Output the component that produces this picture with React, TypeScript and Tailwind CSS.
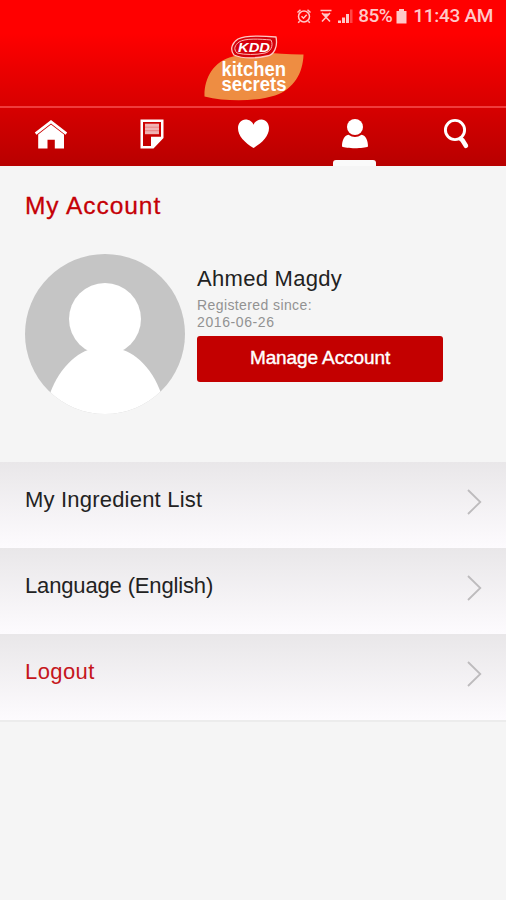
import type { ReactNode } from 'react';

interface NavItemProps {
  label: string;
  active?: boolean;
  children: ReactNode;
}

interface MenuRowProps {
  label: string;
  className: string;
}

function StatusBar() {
  return (
    <div className="flex h-8 items-center justify-end pr-[13px] text-[#ffc8c8]">
      <svg width="16" height="16" viewBox="0 0 16 16" fill="none" stroke="currentColor" strokeWidth="1.5">
        <circle cx="8" cy="8.5" r="5.5" />
        <path d="M1.5 4.5 4.5 1.8M14.5 4.5 11.5 1.8M3.6 13.2 2.2 14.8M12.4 13.2l1.4 1.6M5.5 8.2l2 2 3.2-3.4" />
      </svg>
      <svg className="ml-[7px]" width="14" height="16" viewBox="0 0 14 16" fill="none" stroke="currentColor" strokeWidth="1.5">
        <path d="M1.5 2.5h11M3 5l8 8.5M11 5l-8 8.5" />
        <path d="M4 5.5h6L7 9z" fill="currentColor" stroke="none" />
      </svg>
      <svg className="ml-1" width="17" height="16" viewBox="0 0 17 16" fill="currentColor">
        <path d="M1 12.5h3V15H1zM5 9.5h3V15H5zM9 6h3v9H9z" />
        <path d="M13 1.5h2.5V15H13z" opacity=".35" />
      </svg>
      <span className="ml-1 font-[Roboto,sans-serif] text-[19px] font-medium leading-8 tracking-[-0.5px]">85%</span>
      <svg className="ml-1" width="11" height="16" viewBox="0 0 11 16" fill="currentColor">
        <path d="M3 1h5v2h2.5v12.5H.5V3H3z" />
      </svg>
      <span className="ml-[6px] font-[Roboto,sans-serif] text-[19px] font-medium leading-8 tracking-[-0.3px]">11:43 AM</span>
    </div>
  );
}

function Logo() {
  return (
    <svg className="ml-[203px] block" width="102" height="68" viewBox="203 34 102 68" role="img" aria-label="KDD kitchen secrets">
      <path d="M204.5 96.5C204 79 213 61 233 56.5C256 49 282 55 303.5 54.5C303 73 294 89 275 95.5C256 101.5 227 102 204.5 96.5Z" fill="#ee8d42" />
      <path d="M238 39C246 35 264 36 276 37C278 47 274 55 267 56C257 58 243 59 234 55C229 49 233 42 238 39Z" fill="#d5000b" stroke="#ffc9c4" strokeWidth="1.3" />
      <path d="M239 42C245 38 260 39 271 40C274 46 270 52 265 53C256 55 245 55 237 53C233 49 235 45 239 42Z" fill="#d5000b" stroke="#ffb5b0" strokeWidth="1" />
      <text x="238" y="52" fill="#fff" fontFamily="Liberation Sans, sans-serif" fontSize="12" fontWeight="700" fontStyle="italic" textLength="32" lengthAdjust="spacingAndGlyphs">KDD</text>
      <g fill="#fff" fontFamily="Liberation Sans, sans-serif" fontSize="19.5" fontWeight="700">
        <text x="221.5" y="75.5" textLength="64.5" lengthAdjust="spacingAndGlyphs">kitchen</text>
        <text x="221.5" y="91.2" textLength="65" lengthAdjust="spacingAndGlyphs">secrets</text>
      </g>
    </svg>
  );
}

function NavItem({ label, active, children }: NavItemProps) {
  return (
    <button aria-label={label} className="flex h-full flex-col items-center justify-between pt-3">
      <svg className="overflow-visible" width="34" height="30" viewBox="0 0 34 30" fill="#fff">
        {children}
      </svg>
      {active && <span className="h-[6px] w-[43px] rounded-t-[3px] bg-[#fafafa]" />}
    </button>
  );
}

function NavBar() {
  return (
    <nav className="grid h-[60px] grid-cols-5 border-t-2 border-[#ef3c3c]">
      <NavItem label="Home">
        <path d="M17 0 33.2 12.5 31.5 14.7 17 3.6 2.5 14.7.8 12.5z" />
        <path d="M17 4.6 30 14.5V28.5h-9.2v-8.8h-7.3v8.8H4.2V14.5z" />
      </NavItem>
      <NavItem label="Recipes">
        <path fillRule="evenodd" d="M5.5-.5H28.5V18L18.5 28.5H5.5zM8 2V26H16V16.7H26V2z" />
        <path d="M10 3.7h14v10.5H10z" opacity=".7" />
        <path d="M10 7.2h14M10 10.7h14" stroke="#e66565" strokeWidth=".6" />
      </NavItem>
      <NavItem label="Favourites">
        <path d="M17.5 28C8.5 22.5 2 16 2 8C2 3.3 5.3-.5 9.5-.5C13.3-.5 16.3 1.6 17.5 4.7C18.7 1.6 21.7-.5 25.5-.5C29.7-.5 33 3.3 33 8C33 16 26.5 22.5 17.5 28Z" />
      </NavItem>
      <NavItem label="Account" active>
        <circle cx="18" cy="7" r="8" />
        <path d="M11.5 14.7Q18 19.5 24.5 14.7C29 15.5 31 20.5 31 26.5C27 28.8 9 28.8 5 26.5C5 20.5 7 15.5 11.5 14.7Z" />
      </NavItem>
      <NavItem label="Search">
        <circle cx="17" cy="10" r="9.6" fill="none" stroke="#fff" strokeWidth="2.9" />
        <path d="m22.9 19 1.6 1.3 3.4 5.5" fill="none" stroke="#fff" strokeWidth="4.6" strokeLinecap="round" />
      </NavItem>
    </nav>
  );
}

function Avatar() {
  return (
    <svg className="shrink-0" width="160" height="160" viewBox="0 0 160 160">
      <defs>
        <clipPath id="avatar">
          <circle cx="80" cy="80" r="80" />
        </clipPath>
      </defs>
      <g clipPath="url(#avatar)">
        <path d="M0 0h160v160H0z" fill="#c5c5c5" />
        <circle cx="80" cy="65" r="36" fill="#fff" />
        <path d="M20 160C25 124 46 102 63 96H98C116 102 136 124 141 160Z" fill="#fff" />
      </g>
    </svg>
  );
}

function MenuRow({ label, className }: MenuRowProps) {
  return (
    <button className="flex h-[86px] w-full items-start justify-between bg-linear-to-b from-[#e9e7e9] to-[#fdfbfe] pl-[25px] pr-6 pt-[26px] text-left">
      <span className={`text-[22px] leading-6 ${className}`}>{label}</span>
      <svg className="mt-px" width="15" height="26" viewBox="0 0 15 26" fill="none" stroke="#bdbbbd" strokeWidth="1.8">
        <path d="M1 1 13.3 13 1 25" />
      </svg>
    </button>
  );
}

export default function App() {
  return (
    <div className="h-[900px] w-[506px] overflow-hidden bg-[#f5f5f5] font-['Liberation_Sans',Arial,sans-serif]">
      <header className="h-[166px] bg-linear-to-b from-[#ff0000] from-20% to-[#b80000]">
        <StatusBar />
        <div className="h-[74px] pt-[2px]">
          <Logo />
        </div>
        <NavBar />
      </header>

      <main>
        <h1 className="pl-[25px] pt-[26px] text-[24.5px] leading-7 tracking-[0.95px] text-[#c50006] [-webkit-text-stroke:0.3px]">My Account</h1>
        <section className="flex h-[242px] items-start pl-[25px] pt-[34px]">
          <Avatar />
          <div className="ml-3 pt-3">
            <h2 className="text-[22px] leading-[26px] tracking-[0.3px] text-[#222]">Ahmed Magdy</h2>
            <p className="mt-[5px] text-[14px] leading-[17px] tracking-[0.4px] text-[#929292]">
              Registered since:
              <br />
              <span className="tracking-[0.6px]">2016-06-26</span>
            </p>
            <button className="mt-[5px] block h-[46px] w-[246px] rounded-[3px] bg-[#c30000] pb-[2px] text-[19px] tracking-[-0.1px] text-white [-webkit-text-stroke:0.4px]">
              Manage Account
            </button>
          </div>
        </section>
        <div className="border-b-2 border-[#ececec]">
          <MenuRow label="My Ingredient List" className="tracking-[0.2px] text-[#222]" />
          <MenuRow label="Language (English)" className="tracking-[-0.15px] text-[#222]" />
          <MenuRow label="Logout" className="tracking-[0.4px] text-[#c5161c]" />
        </div>
      </main>
    </div>
  );
}
